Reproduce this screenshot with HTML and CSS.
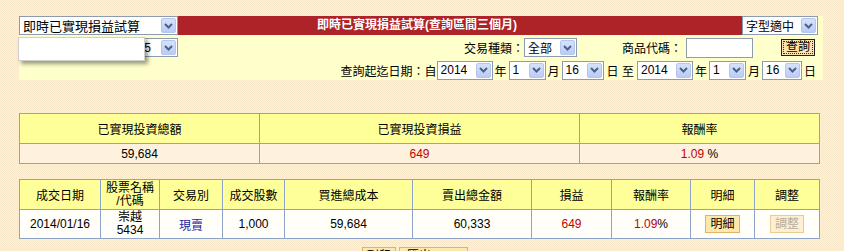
FILE: index.html
```html
<!DOCTYPE html>
<html lang="zh-Hant">
<head>
  <meta charset="UTF-8" />
  <title>即時已實現損益試算</title>
  <link rel="stylesheet" href="styles.css">
</head>
<body>
  <div class="page">
    <div class="panel">
      <div class="top-row">
        <span class="sel sel-func"><span class="sel-text">即時已實現損益試算</span><span class="sel-btn"><svg width="9" height="6" viewBox="0 0 9 6"><polyline points="1,1 4.5,4.5 8,1" /></svg></span></span>
        <div class="title">即時已實現損益試算(查詢區間三個月)</div>
        <span class="sel sel-font"><span class="sel-text">字型適中</span><span class="sel-btn"><svg width="9" height="6" viewBox="0 0 9 6"><polyline points="1,1 4.5,4.5 8,1" /></svg></span></span>
      </div>

      <div class="query-row">
        <span class="sel sel-acct"><span class="sel-text">5</span><span class="sel-btn"><svg width="9" height="6" viewBox="0 0 9 6"><polyline points="1,1 4.5,4.5 8,1" /></svg></span></span>
        <div class="query-right">
          <span class="label">交易種類：</span>
          <span class="sel sel-type"><span class="sel-text">全部</span><span class="sel-btn"><svg width="9" height="6" viewBox="0 0 9 6"><polyline points="1,1 4.5,4.5 8,1" /></svg></span></span>
          <span class="label label-code">商品代碼：</span>
          <input class="code-input" type="text" />
          <button class="btn-query"><span>查詢</span></button>
        </div>
      </div>

      <div class="date-row">
        <span class="label">查詢起迄日期：自</span>
        <span class="sel sel-year"><span class="sel-text">2014</span><span class="sel-btn"><svg width="9" height="6" viewBox="0 0 9 6"><polyline points="1,1 4.5,4.5 8,1" /></svg></span></span>
        <span class="unit">年</span>
        <span class="sel sel-month"><span class="sel-text">1</span><span class="sel-btn"><svg width="9" height="6" viewBox="0 0 9 6"><polyline points="1,1 4.5,4.5 8,1" /></svg></span></span>
        <span class="unit">月</span>
        <span class="sel sel-day"><span class="sel-text">16</span><span class="sel-btn"><svg width="9" height="6" viewBox="0 0 9 6"><polyline points="1,1 4.5,4.5 8,1" /></svg></span></span>
        <span class="unit unit-to">日 至</span>
        <span class="sel sel-year"><span class="sel-text">2014</span><span class="sel-btn"><svg width="9" height="6" viewBox="0 0 9 6"><polyline points="1,1 4.5,4.5 8,1" /></svg></span></span>
        <span class="unit">年</span>
        <span class="sel sel-month"><span class="sel-text">1</span><span class="sel-btn"><svg width="9" height="6" viewBox="0 0 9 6"><polyline points="1,1 4.5,4.5 8,1" /></svg></span></span>
        <span class="unit">月</span>
        <span class="sel sel-day2"><span class="sel-text">16</span><span class="sel-btn"><svg width="9" height="6" viewBox="0 0 9 6"><polyline points="1,1 4.5,4.5 8,1" /></svg></span></span>
        <span class="unit">日</span>
      </div>

      <!-- 下拉選單展開的空白清單 -->
      <div class="popup"></div>
    </div>

    <table class="summary">
      <colgroup><col style="width:240px"><col style="width:320px"><col style="width:240px"></colgroup>
      <tr class="head">
        <th>已實現投資總額</th>
        <th>已實現投資損益</th>
        <th>報酬率</th>
      </tr>
      <tr class="data">
        <td>59,684</td>
        <td class="red">649</td>
        <td><span class="red">1.09</span> %</td>
      </tr>
    </table>

    <table class="detail">
      <colgroup>
        <col style="width:81px"><col style="width:59px"><col style="width:63px"><col style="width:62px"><col style="width:128px">
        <col style="width:119px"><col style="width:80px"><col style="width:79px"><col style="width:64px"><col style="width:65px">
      </colgroup>
      <tr class="head">
        <th>成交日期</th>
        <th class="two">股票名稱<br>/代碼</th>
        <th>交易別</th>
        <th>成交股數</th>
        <th>買進總成本</th>
        <th>賣出總金額</th>
        <th>損益</th>
        <th>報酬率</th>
        <th>明細</th>
        <th>調整</th>
      </tr>
      <tr class="data">
        <td>2014/01/16</td>
        <td class="two">崇越<br>5434</td>
        <td class="blue">現賣</td>
        <td>1,000</td>
        <td>59,684</td>
        <td>60,333</td>
        <td class="red">649</td>
        <td><span class="red">1.09</span>%</td>
        <td><button class="btn">明細</button></td>
        <td><button class="btn" disabled>調整</button></td>
      </tr>
    </table>

    <div class="actions">
      <button class="btn">列印</button>
      <button class="btn btn-excel">匯出Excel</button>
    </div>
  </div>
</body>
</html>
```

FILE: styles.css
```css
body {
  margin: 0;
  font-family: "Liberation Sans", "Noto Sans CJK TC", sans-serif;
  font-size: 12px;
  color: #000;
  background-color: #fbecd4;
  background-image: repeating-conic-gradient(#fdf2df 0 25%, #f8e6c9 0 50%);
  background-size: 2px 2px;
}
.page {
  width: 804px;
  margin-left: 19px;
  padding-top: 16px;
}
.panel {
  position: relative;
  background: #ffffcc;
  height: 64px;
}
.top-row {
  display: flex;
  height: 19px;
}
.title {
  flex: 1;
  background: #ad2328;
  color: white;
  font-weight: bold;
  font-size: 12px;
  line-height: 19px;
  text-align: center;
  padding-right: 86px;
}
.sel {
  display: inline-flex;
  align-items: center;
  box-sizing: border-box;
  height: 19px;
  border: 1px solid #8c9cae;
  background: white;
  padding-left: 3px;
  white-space: nowrap;
}
.sel-text {
  flex: 1;
  overflow: hidden;
}
.sel-btn {
  width: 15px;
  height: 15px;
  margin-right: 1px;
  box-sizing: border-box;
  border: 1px solid #b4c6ee;
  border-radius: 2px;
  background: linear-gradient(#d6e2fc, #b9ccf6);
  display: flex;
  align-items: center;
  justify-content: center;
}
.sel-btn polyline {
  fill: none;
  stroke: #4d6185;
  stroke-width: 2;
}
.sel-func { width: 159px; font-size: 13px; }
.sel-font { width: 76px; margin-right: 5px; }
.sel-acct { width: 159px; }
.sel-acct .sel-text { text-align: right; padding-right: 10px; }
.sel-type { width: 53px; }
.sel-year { width: 56px; }
.sel-month { width: 37px; }
.sel-day { width: 42px; }
.sel-day2 { width: 40px; }

.query-row {
  display: flex;
  align-items: center;
  height: 23px;
  padding-top: 1px;
}
.query-right {
  margin-left: auto;
  display: flex;
  align-items: center;
  margin-right: 8px;
}
.label-code {
  margin-left: 45px;
  margin-right: 4px;
}
.code-input {
  box-sizing: border-box;
  width: 67px;
  height: 20px;
  border: 1px solid #8c9cae;
  background: white;
  margin: 0 28px 0 0;
  padding: 0;
}
.btn-query {
  box-sizing: border-box;
  width: 34px;
  height: 17px;
  padding: 1px;
  border: 1px solid #222;
  background: #fde2b0;
  font: inherit;
}
.btn-query span {
  display: block;
  border: 1px dotted #333;
  line-height: 11px;
}

.date-row {
  display: flex;
  justify-content: flex-end;
  align-items: center;
  height: 22px;
  padding-right: 5px;
}
.unit {
  margin: 0 2px;
}
.unit-to {
  margin: 0 3px;
}

.popup {
  position: absolute;
  left: -1px;
  top: 21px;
  width: 127px;
  height: 24px;
  background: white;
  border: 1px solid #d0d0d0;
  box-sizing: border-box;
  box-shadow: 3px 3px 4px rgba(0,0,0,0.4);
}

table {
  border-collapse: collapse;
  table-layout: fixed;
  width: 800px;
}
th, td {
  border: 1px solid #8ea3c8;
  text-align: center;
  font-weight: normal;
  padding: 0;
}
.head th {
  background: #ffff99;
  height: 29px;
}
.summary {
  margin-top: 33px;
}
.summary .data td {
  background: #fef2df;
  height: 19px;
}
.detail {
  margin-top: 15px;
}
.detail .data td {
  background: #fffef8;
  height: 28px;
}
.two {
  line-height: 13px;
}
.red { color: #c40000; }
.blue { color: #1c1ca6; }

.btn {
  font: inherit;
  height: 18px;
  padding: 0 4px;
  border: 1px solid #e0b468;
  background: #fde7ac;
  color: #000;
  line-height: 14px;
}
.btn:disabled {
  background: #fdf0d2;
  border-color: #eccb8e;
  color: #b5ad9c;
}
.btn-excel {
  padding: 0 7px;
}
.actions {
  text-align: center;
  margin-top: 8px;
  padding-right: 12px;
}
```
